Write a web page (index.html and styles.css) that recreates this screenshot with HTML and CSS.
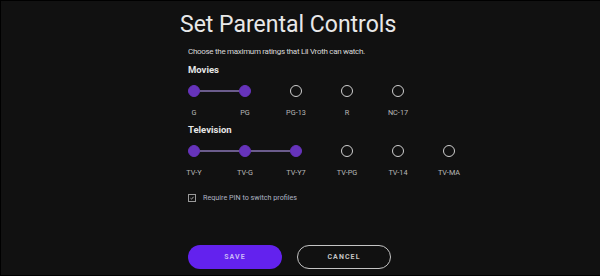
FILE: index.html
```html
<!DOCTYPE html>
<html lang="en">
<head>
<meta charset="utf-8">
<title>Set Parental Controls</title>
<link rel="stylesheet" href="styles.css">
</head>
<body>
<main class="screen">
  <h1 class="title">Set Parental Controls</h1>
  <div class="content">
    <p class="lead">Choose the maximum ratings that Lil Vroth can watch.</p>

    <h2 class="section">Movies</h2>
    <div class="ratings">
      <div class="rating on"><span class="dot"></span><span class="label">G</span></div>
      <div class="rating on linked"><span class="dot"></span><span class="label">PG</span></div>
      <div class="rating"><span class="dot"></span><span class="label">PG-13</span></div>
      <div class="rating"><span class="dot"></span><span class="label">R</span></div>
      <div class="rating"><span class="dot"></span><span class="label">NC-17</span></div>
    </div>

    <h2 class="section">Television</h2>
    <div class="ratings">
      <div class="rating on"><span class="dot"></span><span class="label">TV-Y</span></div>
      <div class="rating on linked"><span class="dot"></span><span class="label">TV-G</span></div>
      <div class="rating on linked"><span class="dot"></span><span class="label">TV-Y7</span></div>
      <div class="rating"><span class="dot"></span><span class="label">TV-PG</span></div>
      <div class="rating"><span class="dot"></span><span class="label">TV-14</span></div>
      <div class="rating"><span class="dot"></span><span class="label">TV-MA</span></div>
    </div>

    <label class="pin">
      <span class="box"><svg viewBox="0 0 8 8" width="8" height="8"><path d="M2 4.3 L3.4 5.6 L6 2.4" fill="none" stroke="#d0d0d0" stroke-width="1"/></svg></span>
      <span class="pin-text">Require PIN to switch profiles</span>
    </label>

    <div class="actions">
      <button class="btn save" type="button">SAVE</button>
      <button class="btn cancel" type="button">CANCEL</button>
    </div>
  </div>
</main>
</body>
</html>
```

FILE: styles.css
```css
* { box-sizing: border-box; }
html, body { margin: 0; padding: 0; background: #111111; }
body { font-family: Roboto, "Noto Sans", sans-serif; }

.screen {
  width: 600px;
  height: 276px;
  background: #111111;
  border: 1px solid #000;
  border-right: none;
  padding: 10px 0 0 179px;
  overflow: hidden;
}

.title {
  margin: 0;
  font-size: 23px;
  line-height: 28px;
  font-weight: 400;
  color: #e8e8e8;
  letter-spacing: 0;
}

.content { padding-left: 8px; }

.lead {
  margin: 8px 0 0;
  font-size: 8px;
  line-height: 10px;
  letter-spacing: -0.3px;
  color: #d8d8d8;
}

.section {
  margin: 7px 0 0;
  font-size: 9.5px;
  line-height: 12px;
  font-weight: 700;
  color: #e6e6e6;
}

.ratings {
  display: flex;
  gap: 39px;
  margin-top: 9px;
}

.rating {
  position: relative;
  width: 12px;
  display: flex;
  flex-direction: column;
  align-items: center;
}

.dot {
  width: 12px;
  height: 12px;
  border-radius: 50%;
  border: 1.5px solid #cfcfcf;
  flex: none;
}

.rating.on .dot {
  background: #6633bb;
  border-color: #6633bb;
}

.rating.linked::before {
  content: "";
  position: absolute;
  top: 5px;
  right: 12px;
  width: 39px;
  height: 2px;
  background: #6b5c8c;
}

.label {
  margin-top: 11px;
  font-size: 7.3px;
  line-height: 9px;
  color: #b8b8b8;
  white-space: nowrap;
}

.pin {
  display: flex;
  align-items: center;
  gap: 7px;
  margin-top: 16px;
  height: 10px;
}

.box {
  width: 8px;
  height: 8px;
  border: 1px solid #9a9a9a;
  display: flex;
  align-items: center;
  justify-content: center;
  flex: none;
}
.box svg { display: block; width: 6px; height: 6px; }

.pin-text {
  font-size: 7.2px;
  line-height: 10px;
  color: #aeb4c4;
}

.actions {
  display: flex;
  gap: 15px;
  margin-top: 42px;
}

.btn {
  width: 94px;
  height: 24px;
  border-radius: 12px;
  font-family: Roboto, "Noto Sans", sans-serif;
  font-size: 7px;
  font-weight: 700;
  letter-spacing: 1.1px;
  padding: 0;
  cursor: pointer;
}

.save {
  background: #6322ee;
  border: none;
  color: #c9b9f7;
}

.cancel {
  background: transparent;
  border: 1.5px solid #c4c4c4;
  color: #c4c4c4;
}
```
